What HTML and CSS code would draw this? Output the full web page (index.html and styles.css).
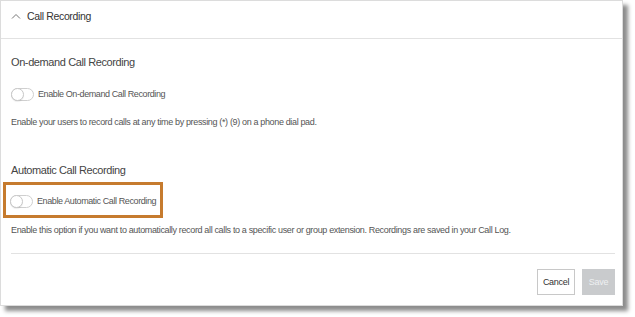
FILE: index.html
```html
<!DOCTYPE html>
<html>
<head>
<meta charset="utf-8">
<link rel="stylesheet" href="styles.css">
</head>
<body>
<div class="card">
  <div class="header">
    <svg class="chev" width="10" height="6" viewBox="0 0 10 6"><path d="M1 5.5 L5 1.5 L9 5.5" fill="none" stroke="#777" stroke-width="1"/></svg>
    <span class="title">Call Recording</span>
  </div>
  <div class="body">
    <div class="section">
      <div class="heading">On-demand Call Recording</div>
      <div class="toggle-row">
        <span class="toggle"><span class="knob"></span></span>
        <span class="label">Enable On-demand Call Recording</span>
      </div>
      <div class="desc">Enable your users to record calls at any time by pressing (*) (9) on a phone dial pad.</div>
    </div>
    <div class="section second">
      <div class="heading">Automatic Call Recording</div>
      <div class="toggle-row highlight">
        <span class="toggle"><span class="knob"></span></span>
        <span class="label">Enable Automatic Call Recording</span>
      </div>
      <div class="desc">Enable this option if you want to automatically record all calls to a specific user or group extension. Recordings are saved in your Call Log.</div>
    </div>
    <div class="footer">
      <button class="btn cancel">Cancel</button>
      <button class="btn save">Save</button>
    </div>
  </div>
</div>
</body>
</html>
```
FILE: styles.css
```css
html, body {
  margin: 0;
  padding: 0;
  background: #fff;
}
body {
  font-family: "Liberation Sans", Arial, sans-serif;
  width: 635px;
  height: 317px;
  overflow: hidden;
}
.card {
  box-sizing: border-box;
  width: 623px;
  height: 306px;
  border: 1px solid #dcdcdc;
  background: #fff;
  box-shadow: 5px 5px 4px rgba(0,0,0,0.45);
}
.header {
  box-sizing: border-box;
  height: 38px;
  border-bottom: 1px solid #e2e2e2;
  display: flex;
  align-items: center;
  padding-left: 10px;
  padding-bottom: 7px;
}
.chev {
  margin-right: 6px;
}
.title {
  font-size: 10.5px;
  letter-spacing: -0.35px;
  color: #333;
}
.body {
  padding: 0 7px 0 10px;
}
.section {
  display: flex;
  flex-direction: column;
}
.heading {
  font-size: 11px;
  letter-spacing: -0.4px;
  color: #444;
  margin-top: 16px;
  line-height: 14px;
}
.toggle-row {
  display: flex;
  align-items: center;
  margin-top: 17px;
  height: 16px;
}
.toggle {
  box-sizing: border-box;
  width: 23px;
  height: 13px;
  border: 1px solid #cfcfcf;
  border-radius: 7px;
  position: relative;
  margin-right: 4px;
  background: #fff;
}
.knob {
  position: absolute;
  left: -1px;
  top: -1px;
  width: 13px;
  height: 13px;
  box-sizing: border-box;
  border: 1px solid #c8c8c8;
  border-radius: 50%;
  background: #fff;
  box-shadow: 0 1px 1px rgba(0,0,0,0.08);
}
.label {
  font-size: 9px;
  letter-spacing: -0.4px;
  color: #555;
}
.desc {
  font-size: 9px;
  letter-spacing: -0.35px;
  color: #555;
  margin-top: 14px;
  line-height: 12px;
}
.second .heading {
  margin-top: 35px;
}
.highlight {
  align-self: flex-start;
  margin-left: -8px;
  margin-top: 5px;
  padding: 8px 4px 6px 4px;
  border: 3px solid #c67b2e;
  height: 16px;
}
.second .desc {
  margin-top: 6px;
}
.footer {
  border-top: 1px solid #e2e2e2;
  margin-top: 17px;
  display: flex;
  justify-content: flex-end;
  gap: 7px;
  padding-top: 15px;
}
.btn {
  font-family: inherit;
  font-size: 9px;
  letter-spacing: -0.3px;
  height: 26px;
  padding: 0;
  border-radius: 0;
}
.cancel {
  background: #fff;
  border: 1px solid #c8c8c8;
  color: #333;
  width: 38px;
}
.save {
  background: #c9cbcd;
  border: 1px solid #c9cbcd;
  color: #eef0f2;
  width: 33px;
}
```
